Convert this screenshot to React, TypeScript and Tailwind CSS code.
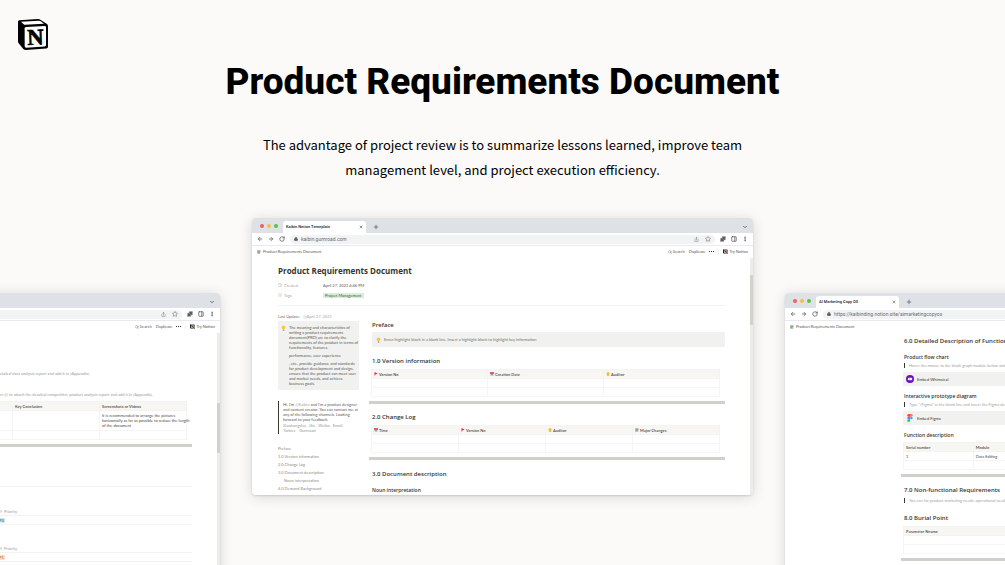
import React from 'react';
import {
  ArrowLeft,
  ArrowRight,
  ChevronDown,
  Clock,
  EllipsisVertical,
  List,
  Lock,
  PanelRight,
  Plus,
  Puzzle,
  RotateCw,
  Search,
  Share,
  Star,
  X,
} from 'lucide-react';

const NotionCube: React.FC<{ className?: string }> = ({ className }) => (
  <svg viewBox="0 0 96 96" className={className} role="img" aria-label="Notion">
    <path d="M3 10 Q3 7 7 6.500 L62 3 Q67 2.600 70 5 L90 18 Q93 20.500 93 24 L93 87 Q93 91 88 91.500 L26 96 Q22 96 19 93 L5 76 Q3 74 3 70 Z" fill="#000" />
    <path d="M12 11 L65 8 Q68 8 70 9 L81 17 L24 20.500 Q22 20.500 20 19 Z" fill="#fff" />
    <path d="M23 31 Q23 27.500 27 27 L83 24 Q87 24 87 28 L87 82 Q87 85 83 85.500 L28 89 Q23 89 23 85 Z" fill="#fff" />
    <text x="55" y="80" textAnchor="middle" fontFamily="Liberation Serif, serif" fontWeight="700" fontSize="68" stroke="#000" strokeWidth="2" transform="rotate(-2 55 60)">N</text>
  </svg>
);

const Bulb = () => (
  <svg viewBox="0 0 12 16" className="h-[6px] w-[5px] shrink-0">
    <circle cx="6" cy="6" r="5" fill="#fcc934" />
    <path d="M4 10h4v3H4z" fill="#f5b83d" />
    <path d="M4 13h4v2H4z" fill="#8c9aa5" />
  </svg>
);

const Memo = () => (
  <svg viewBox="0 0 16 16" className="h-[4px] w-[4px] shrink-0">
    <path d="M1 1h12v14H1z" fill="#9fb4c4" />
    <path d="M3 4h8M3 7h6M3 10h5" stroke="#54636e" />
    <path d="M6 12 14 2l2 2-8 9z" fill="#e7a33a" />
  </svg>
);

const Flag = () => (
  <svg viewBox="0 0 16 16" className="h-[4px] w-[4px] shrink-0">
    <path d="M3 1v14" stroke="#dd2e44" strokeWidth="2" />
    <path d="M3 1 15 6 3 11z" fill="#dd2e44" />
  </svg>
);

const Calendar = () => (
  <svg viewBox="0 0 16 16" className="h-[4px] w-[4px] shrink-0">
    <path d="M1 5h14v10H1z" fill="#c5d3dd" />
    <path d="M0 1h16v6H0z" fill="#dd2e44" />
    <path d="M4 9h8v4H4z" fill="#8799a6" />
  </svg>
);

const Person = () => (
  <svg viewBox="0 0 16 16" className="h-[4px] w-[4px] shrink-0">
    <circle cx="8" cy="6" r="6" fill="#fcc21b" />
    <path d="M4 10h8v5H4z" fill="#f5a623" />
  </svg>
);

const Whimsical = () => (
  <svg viewBox="0 0 24 24" className="h-[8px] w-[8px] shrink-0">
    <circle cx="12" cy="12" r="12" fill="#6a0fc4" />
    <path d="M7 8h8a4 4 0 0 1 0 8H9a4 4 0 0 1-4-4z" fill="#fff" />
    <path d="M10 8v8" stroke="#6a0fc4" strokeWidth="1" />
  </svg>
);

const Figma = () => (
  <svg viewBox="0 0 16 24" className="h-[8px] w-[8px] shrink-0">
    <path d="M4 0h4v8H4a4 4 0 0 1 0-8z" fill="#f24e1e" />
    <path d="M8 0h4a4 4 0 0 1 0 8H8z" fill="#ff7262" />
    <path d="M4 8h4v8H4a4 4 0 0 1 0-8z" fill="#a259ff" />
    <circle cx="12" cy="12" r="4" fill="#1abcfe" />
    <path d="M4 16h4v4a4 4 0 1 1-4-4z" fill="#0acf83" />
  </svg>
);

interface BrowserProps {
  tab: string;
  url: string;
  thumb: string;
  className?: string;
  children: React.ReactNode;
}

const Browser: React.FC<BrowserProps> = ({ tab, url, thumb, className = '', children }) => (
  <section className={`flex w-[501px] shrink-0 flex-col overflow-hidden rounded-[4px] bg-white shadow-[0_2px_14px_rgba(0,0,0,0.14),0_1px_2px_rgba(0,0,0,0.12)] ${className}`}>
    {/* tab strip */}
    <div className="flex h-[15px] shrink-0 items-end bg-[#dee1e6] pr-[5px]">
      <div className="flex h-full items-center gap-[3px] px-[8px]">
        <span className="h-[4px] w-[4px] rounded-full bg-[#ee6055]" />
        <span className="h-[4px] w-[4px] rounded-full bg-[#f5bd4f]" />
        <span className="h-[4px] w-[4px] rounded-full bg-[#5ac24a]" />
      </div>
      <div className="ml-[-3px] flex h-[12px] w-[83px] items-center justify-between rounded-t-[3px] bg-white px-[3px] font-['Roboto',sans-serif] text-[4px] leading-[6px] font-semibold text-[#303236]">
        <span>{tab}</span>
        <button aria-label="Close tab"><X className="h-[4px] w-[4px]" strokeWidth={3} /></button>
      </div>
      <button aria-label="New tab" className="mb-[3px] ml-[7px]"><Plus className="h-[6px] w-[6px] text-[#5f6368]" strokeWidth={3} /></button>
      <button aria-label="Search tabs" className="mb-[3px] ml-auto"><ChevronDown className="h-[6px] w-[6px] text-[#45484c]" strokeWidth={3} /></button>
    </div>

    {/* toolbar */}
    <div className="flex h-[13px] shrink-0 items-center gap-[5px] border-b border-[#e8eaed] px-[5px] text-[#5a5e63]">
      <button aria-label="Back"><ArrowLeft className="h-[6px] w-[6px]" strokeWidth={3} /></button>
      <button aria-label="Forward"><ArrowRight className="h-[6px] w-[6px]" strokeWidth={3} /></button>
      <button aria-label="Reload"><RotateCw className="h-[6px] w-[6px]" strokeWidth={3} /></button>
      <div className="flex h-[9px] flex-1 items-center gap-[3px] rounded-full bg-[#f1f3f4] px-[4px]">
        <Lock className="h-[4px] w-[4px]" fill="currentColor" strokeWidth={3} />
        <input aria-label="Address" readOnly value={url} className="h-[7px] min-w-0 flex-1 bg-transparent font-['Roboto',sans-serif] text-[5px] leading-[7px] text-[#6a6e73] outline-none" />
        <button aria-label="Share"><Share className="h-[5px] w-[5px]" strokeWidth={2} /></button>
        <button aria-label="Bookmark" className="ml-[3px]"><Star className="h-[6px] w-[6px]" strokeWidth={2} /></button>
      </div>
      <button aria-label="Extensions"><Puzzle className="h-[6px] w-[6px]" fill="currentColor" strokeWidth={2} /></button>
      <button aria-label="Side panel"><PanelRight className="h-[6px] w-[6px]" strokeWidth={3} /></button>
      <button aria-label="Menu"><EllipsisVertical className="h-[6px] w-[6px]" strokeWidth={3} /></button>
    </div>

    <div className="flex min-h-0 flex-1 flex-col font-['Lato',sans-serif]">
      <div className="flex h-[12px] shrink-0 items-center gap-[2px] px-[5px] pb-[1px] text-[4px] leading-[5px] text-[#5a5854]">
        <Memo />
        <span>Product Requirements Document</span>
        <div className="ml-auto flex items-center gap-[4px]">
          <button className="flex items-center gap-[1px]"><Search className="h-[4px] w-[4px]" strokeWidth={2} />Search</button>
          <button>Duplicate</button>
          <button aria-label="More" className="flex gap-[1px]">
            <span className="h-[1px] w-[1px] bg-[#37352f]" />
            <span className="h-[1px] w-[1px] bg-[#37352f]" />
            <span className="h-[1px] w-[1px] bg-[#37352f]" />
          </button>
          <span className="h-[4px] w-[1px] bg-[#f0f0ee]" />
          <button className="flex items-center gap-[1px]"><NotionCube className="h-[5px] w-[5px]" />Try Notion</button>
        </div>
      </div>
      <div className="flex min-h-0 flex-1">
        <div className="min-w-0 flex-1 overflow-hidden">{children}</div>
        <div className="w-[3px] shrink-0 bg-[#edece9]">
          <div className={`w-full bg-[#d3d1cb] ${thumb}`} />
        </div>
      </div>
    </div>
  </section>
);

const Heading: React.FC<{ children: React.ReactNode; className?: string }> = ({ children, className = '' }) => (
  <h2 className={`pl-[3px] font-['Open_Sans',sans-serif] text-[6px] leading-[8px] font-semibold whitespace-nowrap text-[#37352f] ${className}`}>{children}</h2>
);

const SubHeading: React.FC<{ children: React.ReactNode; className?: string }> = ({ children, className = '' }) => (
  <h3 className={`pl-[3px] font-['Open_Sans',sans-serif] text-[5px] leading-[8px] font-semibold whitespace-nowrap text-[#37352f] ${className}`}>{children}</h3>
);

const Rule = () => <div className="mt-[4px] h-[3px] bg-[#d0cfca]" />;

interface GridTableProps {
  head: React.ReactNode[];
  rows: React.ReactNode[][];
  className?: string;
}

const GridTable: React.FC<GridTableProps> = ({ head, rows, className = '' }) => (
  <div className={`pr-[5px] pl-[2px] ${className}`}>
    <table className="w-full table-fixed border-collapse text-left text-[4px] leading-[5px] text-[#4a4843]">
      <thead>
        <tr className="bg-[#f7f6f3]">
          {head.map((cell, i) => (
            <th key={i} className="h-[9px] border border-[#f3f3f1] px-[2px] font-semibold">
              <span className="flex items-center gap-[1px]">{cell}</span>
            </th>
          ))}
        </tr>
      </thead>
      <tbody>
        {rows.map((row, i) => (
          <tr key={i}>
            {row.map((cell, j) => (
              <td key={j} className="h-[9px] border border-[#f5f5f4] px-[2px]">{cell}</td>
            ))}
          </tr>
        ))}
      </tbody>
    </table>
  </div>
);

const Quote: React.FC<{ children: React.ReactNode }> = ({ children }) => (
  <p className="ml-[3px] border-l border-[#37352f] pl-[4px] text-[4px] leading-[5px] whitespace-nowrap text-[#a3a19d]">{children}</p>
);

const Embed: React.FC<{ icon: React.ReactNode; label: string }> = ({ icon, label }) => (
  <button className="mt-[4px] ml-[2px] flex h-[14px] w-[354px] items-center gap-[3px] bg-[#f1f1ef] px-[3px] text-[4px] leading-[5px] font-medium text-[#4a4843]">
    {icon}
    {label}
  </button>
);

const toc = [
  { label: 'Preface' },
  { label: '1.0 Version information' },
  { label: '2.0 Change Log' },
  { label: '3.0 Document description' },
  { label: 'Noun interpretation', nested: true },
  { label: '4.0 Demand Background' },
  { label: 'Product / Data Status', nested: true },
];

const channels = ['Xiaohongshu', 'Jike', 'Weibo', 'Email'];

const OverviewPage = () => (
  <div className="pr-[25px] pl-[26px] text-[4px] leading-[5px] text-[#5a5854]">
    <h2 className="pt-[8px] font-['Open_Sans',sans-serif] text-[8px] leading-[10px] font-bold text-[#37352f]">Product Requirements Document</h2>
    <div className="mt-[5px] flex h-[8px] items-center">
      <span className="flex w-[45px] items-center gap-[2px] text-[#a9a8a4]"><Clock className="h-[4px] w-[4px]" />Created</span>
      <span>April 27, 2023 4:46 PM</span>
    </div>
    <div className="mt-[2px] flex h-[8px] items-center">
      <span className="flex w-[45px] items-center gap-[2px] text-[#a9a8a4]"><List className="h-[4px] w-[4px]" />Tags</span>
      <span className="bg-[#dbeddb] px-[2px] text-[#2f6147]">Project Management</span>
    </div>
    <div className="mt-[6px] border-t border-[#f1f1ef]" />

    <div className="flex gap-[10px]">
      <aside className="w-[81px] shrink-0">
        <p className="mt-[8px]"><span className="text-[#6f6e69]">Last Update:</span> <span className="ml-[2px] text-[#a9a8a4]">@April 27, 2023</span></p>
        <div className="mt-[2px] flex h-[69px] gap-[3px] bg-[#f1f1ef] px-[3px] py-[4px]">
          <Bulb />
          <div className="flex flex-col gap-[3px] whitespace-nowrap">
            <p>The meaning and characteristics of<br />writing a product requirements<br />document(PRD) are to clarify the<br />requirements of the product in terms of<br />functionality, features,</p>
            <p>performance, user experience</p>
            <p>, etc., provide guidance and standards<br />for product development and design,<br />ensure that the product can meet user<br />and market needs, and achieve<br />business goals.</p>
          </div>
        </div>
        <div className="mt-[11px] border-l border-[#37352f] py-[1px] pl-[4px] whitespace-nowrap">
          <p>Hi, I'm <span className="text-[#a9a8a4]">@Kaibin</span> and I'm a product designer<br />and content creator. You can contact me at<br />any of the following channels. Looking<br />forward to your feedback.</p>
          <p className="mt-[1px] text-[#9b9a97]">
            {channels.map((name) => (
              <span key={name} className="mr-[2px]"><a href="#">{name}</a>,</span>
            ))}
            <br />
            <a href="#">Twitter</a>, <a href="#" className="ml-[2px]">Gumroad</a>
          </p>
        </div>
        <nav className="mt-[12px]">
          {toc.map((item) => (
            <a key={item.label} href="#" className={`block h-[8px] whitespace-nowrap text-[#8d8b87] ${item.nested ? 'pl-[6px]' : ''}`}>{item.label}</a>
          ))}
        </nav>
      </aside>

      <main className="min-w-0 flex-1">
        <Heading className="mt-[15px]">Preface</Heading>
        <div className="mt-[3px] ml-[3px] flex h-[15px] items-center gap-[3px] bg-[#f1f1ef] px-[4px] text-[#73716c]">
          <Bulb />
          Enter/highlight block in a blank line. Insert a highlight block to highlight key information
        </div>
        <Heading className="mt-[10px]">1.0 Version information</Heading>
        <GridTable
          className="mt-[4px]"
          head={[<><Flag />Version No</>, <><Calendar />Creation Date</>, <><Person />Auditor</>]}
          rows={[['', '', ''], ['', '', '']]}
        />
        <Rule />
        <Heading className="mt-[9px]">2.0 Change Log</Heading>
        <GridTable
          className="mt-[4px]"
          head={[<><Calendar />Time</>, <><Flag />Version No</>, <><Person />Auditor</>, <><Memo />Major Changes</>]}
          rows={[['', '', '', ''], ['', '', '', '']]}
        />
        <Rule />
        <Heading className="mt-[10px]">3.0 Document description</Heading>
        <SubHeading className="mt-[8px]">Noun interpretation</SubHeading>
      </main>
    </div>
  </div>
);

const AnalysisPage = () => (
  <div className="pr-[25px] pl-[117px] text-[4px] leading-[5px] text-[#5a5854]">
    <p className="w-[254px] pt-[38px] text-right whitespace-nowrap text-[#9b9a97]">Please enter @ to attach the detailed data analysis report and add it in [Appendix].</p>
    <p className="mt-[16px] w-[317px] text-right whitespace-nowrap text-[#9b9a97]">Please enter @ to attach the detailed competitive product analysis report and add it in [Appendix].</p>
    <GridTable
      className="mt-[4px]"
      head={['Product', 'Link', 'Key Conclusion', 'Screenshots or Videos']}
      rows={[
        ['', '', '', <p className="py-[2px] whitespace-nowrap">It is recommended to arrange the pictures<br />horizontally as far as possible to reduce the length<br />of the document</p>],
        ['', '', '', ''],
      ]}
    />
    <Rule />
    <div className="mt-[39px] border-t border-[#f1f1ef]" />
    <div className="mt-[22px] pl-[163px]">
      <p className="flex items-center gap-[2px] text-[#9b9a97]"><Clock className="h-[3px] w-[3px]" />Priority</p>
    </div>
    <div className="mt-[1px] flex h-[10px] items-center border-y border-[#f3f3f1] pl-[162px]">
      <span className="bg-[#d3e5ef] px-[1px] text-[#28566e]">P0</span>
    </div>
    <div className="mt-[21px] pl-[163px]">
      <p className="flex items-center gap-[2px] text-[#9b9a97]"><Clock className="h-[3px] w-[3px]" />Priority</p>
    </div>
    <div className="mt-[1px] flex h-[10px] items-center border-y border-[#f3f3f1] pl-[162px]">
      <span className="bg-[#fadec9] px-[1px] text-[#a35a28]">P1</span>
    </div>
  </div>
);

const FunctionsPage = () => (
  <div className="pr-[25px] pl-[116px] text-[#37352f]">
    <Heading className="pt-[4px]">6.0 Detailed Description of Functions</Heading>
    <SubHeading className="mt-[8px]">Product flow chart</SubHeading>
    <div className="mt-[2px]" />
    <Quote>Hover the mouse to the blank graph module below and click to insert the flow chart link</Quote>
    <Embed icon={<Whimsical />} label="Embed Whimsical" />
    <SubHeading className="mt-[6px]">Interactive prototype diagram</SubHeading>
    <div className="mt-[2px]" />
    <Quote>Type "/Figma" in the blank line and insert the Figma design link to preview it here</Quote>
    <Embed icon={<Figma />} label="Embed Figma" />
    <SubHeading className="mt-[6px]">Function description</SubHeading>
    <GridTable
      className="mt-[3px]"
      head={['Serial number', 'Module', 'Function', 'Description', 'Remarks']}
      rows={[['1', 'Data Editing', '', '', ''], ['', '', '', '', '']]}
    />
    <Rule />
    <Heading className="mt-[9px]">7.0 Non-functional Requirements</Heading>
    <div className="mt-[4px]" />
    <Quote>You can list product marketing needs, operational needs, financial needs, legal needs and so on</Quote>
    <Heading className="mt-[11px]">8.0 Burial Point</Heading>
    <GridTable
      className="mt-[4px]"
      head={['Parameter Nname', 'Value', 'Remarks']}
      rows={[['', '', ''], ['', '', '']]}
    />
    <Rule />
  </div>
);

const App = () => {
  return (
    <div className="flex h-screen flex-col overflow-hidden bg-[#fbfaf8] text-black">
      <header className="h-[57px] shrink-0 pt-[18px] pl-[17px]">
        <NotionCube className="h-[32px] w-[32px]" />
      </header>

      <div className="shrink-0 text-center">
        <h1 className="font-['Roboto',sans-serif] text-[37px] leading-[50px] font-extrabold whitespace-nowrap">Product Requirements Document</h1>
        <p className="mx-auto mt-[25px] max-w-[500px] font-['Noto_Sans_CJK_SC',sans-serif] text-[13px] leading-[25px]">
          The advantage of project review is to summarize lessons learned, improve team management level, and project execution efficiency.
        </p>
      </div>

      <div className="mt-[36px] flex min-h-0 flex-1 items-stretch justify-center gap-[32px]">
        <Browser tab="Kaibin Notion" url="kaibin.notion.site" thumb="mt-[70px] h-[50px]" className="mt-[75px] mb-[-20px]">
          <AnalysisPage />
        </Browser>
        <Browser tab="Kaibin Notion Temeplate" url="kaibin.gumroad.com" thumb="mt-[17px] h-[50px]" className="mb-[70px]">
          <OverviewPage />
        </Browser>
        <Browser tab="AI Marketing Copy OS" url="https://kaibinding.notion.site/aimarketingcopyos" thumb="mt-[90px] h-[50px]" className="mt-[75px] mb-[-20px]">
          <FunctionsPage />
        </Browser>
      </div>
    </div>
  );
};

export default App;
